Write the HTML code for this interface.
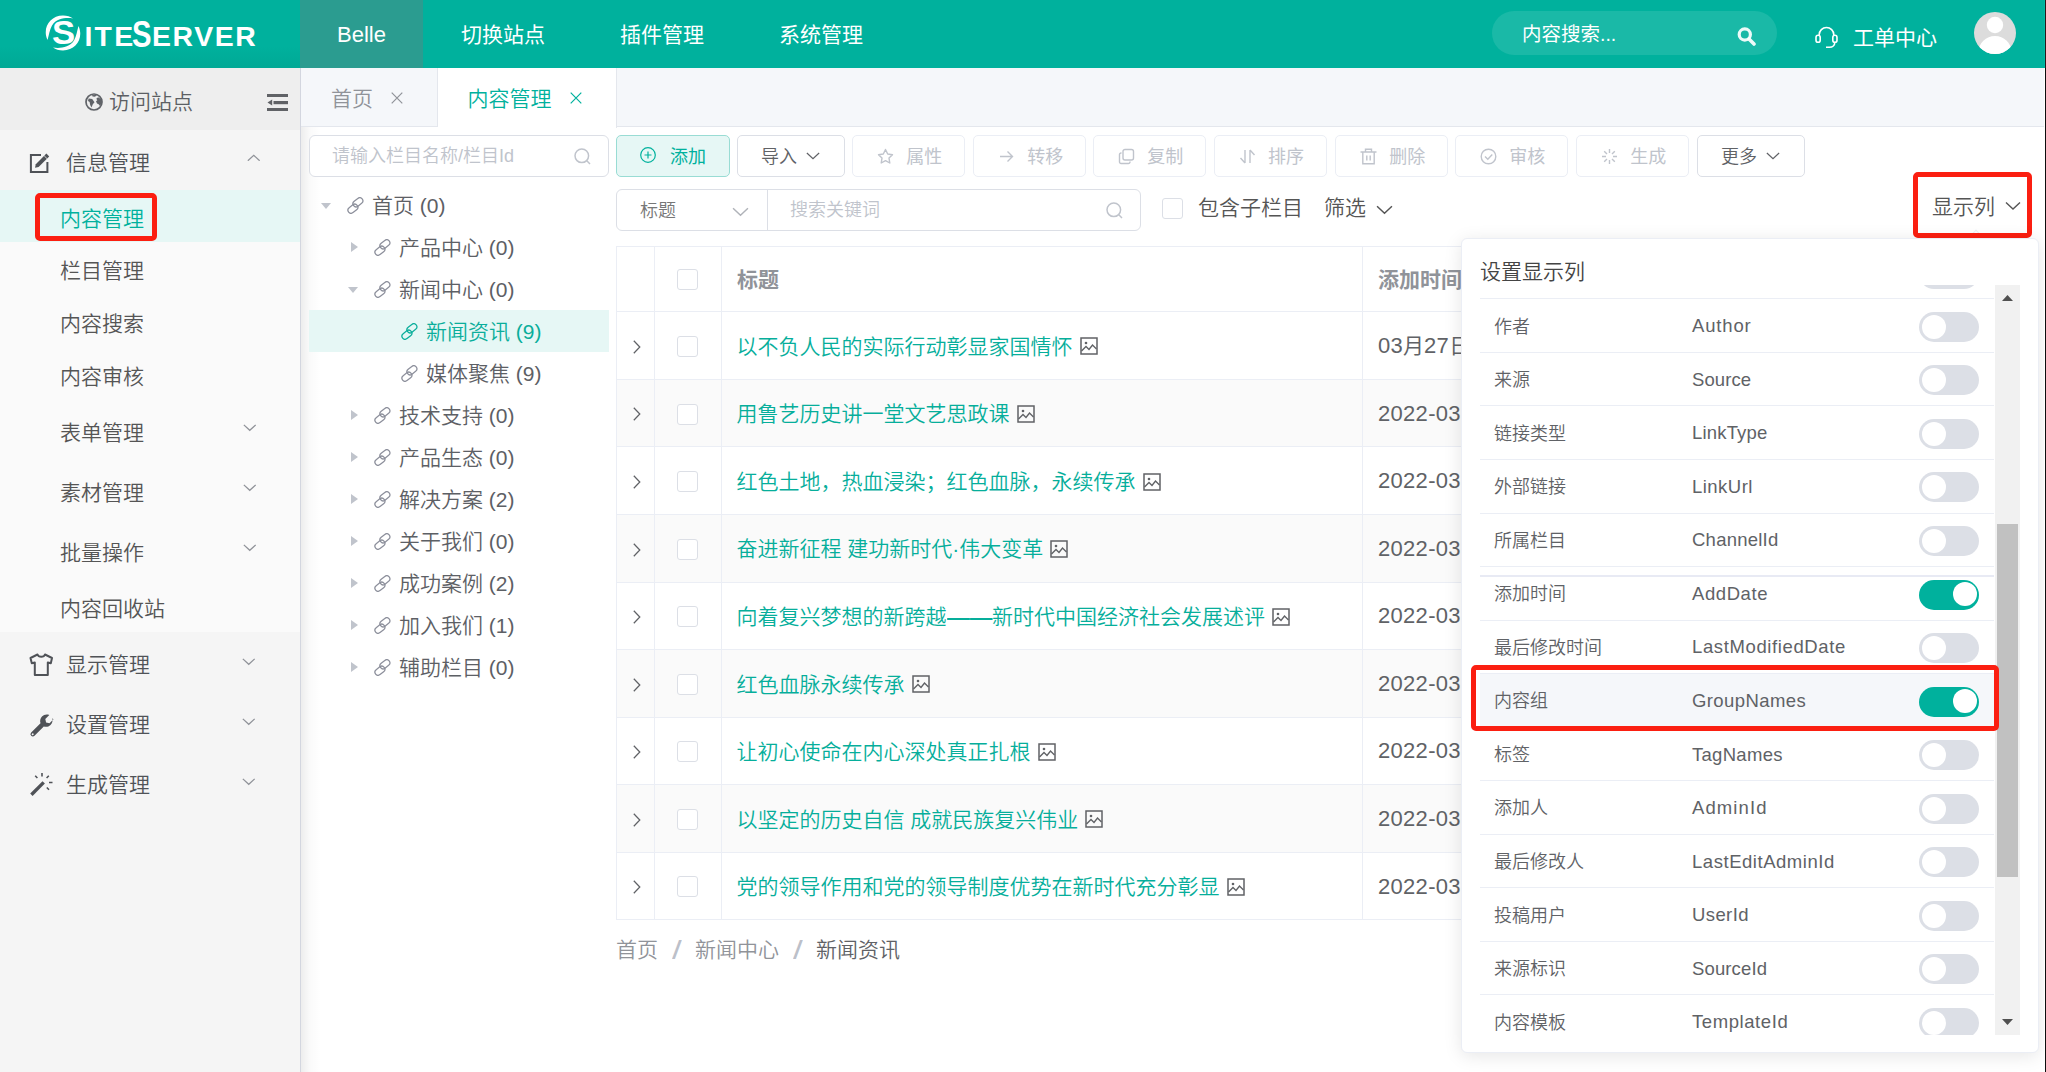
<!DOCTYPE html>
<html lang="zh-CN">
<head>
<meta charset="utf-8">
<title>SiteServer CMS</title>
<style>
*{box-sizing:border-box;margin:0;padding:0}
html,body{width:2046px;height:1072px;overflow:hidden;background:#fff}
body{font-family:"Liberation Sans","Noto Sans CJK SC",sans-serif;font-size:21px;color:#606266;position:relative;font-weight:350}
.abs{position:absolute}
svg{display:block}
i{font-style:normal}
#hdr{position:absolute;left:0;top:0;width:2046px;height:68px;background:#00b19d}
#logo{position:absolute;left:44px;top:14px;width:220px;height:40px;color:#fff}
.lg{position:absolute;line-height:40px;white-space:nowrap;font-weight:700;transform-origin:0 50%}
#belle{position:absolute;left:300px;top:0;width:123px;height:68px;background:#2b9c90;color:#fff;text-align:center;line-height:70px;font-size:22px;font-weight:400}
.nav{position:absolute;top:.7px;height:68px;line-height:68px;color:#fff;font-size:21px;white-space:nowrap;font-weight:400}
#pill{position:absolute;left:1492px;top:11px;width:285px;height:44px;border-radius:22px;background:#1ab9a7}
#pill span{position:absolute;left:30px;top:.7px;line-height:44px;color:#fff;font-size:19.5px;font-weight:400}
#avatar{position:absolute;left:1974px;top:12px;width:42px;height:42px;border-radius:50%;background:#dcdcdc;overflow:hidden}
#side{position:absolute;left:0;top:68px;width:300px;height:1004px;background:#f5f5f5}
#sideb{position:absolute;left:300px;top:68px;width:1px;height:1004px;background:#d3d6df}
#sidesh{position:absolute;left:301px;top:68px;width:20px;height:1004px;background:linear-gradient(90deg,rgba(0,0,0,.07),rgba(0,0,0,.02) 45%,rgba(0,0,0,0))}
#visit{position:absolute;left:0;top:0;width:300px;height:62px;background:#eee}
.m1{position:absolute;left:66px;font-size:21px;color:#505357;white-space:nowrap;line-height:30px}
.m2{position:absolute;left:60px;font-size:21px;color:#555;white-space:nowrap;line-height:30px}
#tabs{position:absolute;left:301px;top:68px;width:1745px;height:59px;background:#f5f7fa;border-bottom:1px solid #e4e7ed}
.tab{position:absolute;top:2px;height:58px;line-height:58px;font-size:21px;color:#909399;white-space:nowrap}
.inp{position:absolute;background:#fff;border:1px solid #dcdfe6;border-radius:6px}
.ph{position:absolute;color:#c0c4cc;font-size:18px;line-height:26px;white-space:nowrap}
.btn{position:absolute;top:135px;height:42px;border:1px solid #ebeef5;border-radius:5px;background:#fff;color:#c0c4cc;font-size:18px;line-height:40px;white-space:nowrap;font-weight:400}
.btn span{position:absolute;top:.7px}
.btn svg{position:absolute}
.tn{position:absolute;font-size:21px;line-height:30px;color:#555;white-space:nowrap}
.sl{color:#bcc0c9;font-weight:400;font-size:25px;transform:scaleX(1.4);transform-origin:0 50%}
.tri{position:absolute;width:0;height:0}
.tri.r{border-left:7px solid #c0c4cc;border-top:5.3px solid transparent;border-bottom:5.3px solid transparent}
.tri.d{border-top:6.5px solid #c0c4cc;border-left:5.5px solid transparent;border-right:5.5px solid transparent}
.cb{position:absolute;width:21px;height:21px;border:1px solid #dcdfe6;border-radius:3px;background:#fff}
#tbl{position:absolute;left:616px;top:246px;width:1414px;height:674px;border-top:1px solid #ebeef5;border-left:1px solid #ebeef5}
.tr{position:absolute;left:0;width:1413px;border-bottom:1px solid #ebeef5}
.tr.s{background:#fafafa}
.vl{position:absolute;top:0;width:1px;height:673px;background:#ebeef5}
.tt{position:absolute;left:119.500px;font-size:21px;line-height:30px;color:#06ae9b;white-space:nowrap;font-weight:350}
.td{position:absolute;left:761px;font-size:21px;line-height:30px;color:#606266;white-space:nowrap;font-weight:400}
.td b{font-weight:400;font-size:22px;letter-spacing:.3px}
.th{position:absolute;font-size:21px;line-height:30px;color:#909399;font-weight:700;white-space:nowrap}
.ex{position:absolute;left:15.700px}
.im{display:inline-block;vertical-align:-1.700px;margin-left:7px}
#pop{position:absolute;left:1461px;top:238px;width:578px;height:815px;background:#fff;border:1px solid #ebeef5;border-radius:6px;box-shadow:0 3px 18px rgba(0,0,0,.1)}
#plist{position:absolute;left:1px;top:46px;width:575px;height:750px;overflow:hidden}
.sep{position:absolute;left:17px;width:514px;height:1px;background:#ebeef5}
.pn{position:absolute;left:31px;font-size:18px;line-height:26px;color:#606266;white-space:nowrap}
.pf{position:absolute;left:229px;font-size:18.5px;line-height:26px;color:#606266;white-space:nowrap;font-weight:400}
.sw{position:absolute;left:456px;width:60px;height:30px;border-radius:15px;background:#dcdfe6}
.sw i{position:absolute;left:3px;top:2.500px;width:24px;height:24px;border-radius:50%;background:#fff}
.sw.on{background:#00b19d}
.sw.on i{left:34px;top:2px}
.red{position:absolute;border:5px solid #fb1f11;border-radius:5px}
</style>
</head>
<body>
<div id="hdr">
  <div id="logo">
    <svg class="abs" style="left:0;top:0" width="38" height="38" viewBox="0 0 38 38"><path d="M3.500 26C-2 14 6 1.500 19 1.500c4 0 7.500 1.200 10 3C23 3.500 12.500 4 8 11.500 5.500 16 5 21 3.500 26z" fill="#fff"/><path d="M34.500 12c5.500 12-2.500 24.500-15.500 24.500-4 0-7.500-1.200-10-3 6 1 16.500.5 21-7 2.500-4.500 3-9.500 4.500-14.500z" fill="#fff"/></svg>
    <span class="lg" style="left:8px;top:-1px;font-size:33px;transform:scaleX(1.050)">S</span>
    <span class="lg" style="left:40.500px;top:2px;font-size:28.400px;letter-spacing:2.200px">ITE</span>
    <span class="lg" style="left:88px;top:-.5px;font-size:37.500px;transform:scaleX(.78)">S</span>
    <span class="lg" style="left:108px;top:2px;font-size:28.400px;letter-spacing:1.600px">ERVER</span>
  </div>
  <div class="abs" style="left:0;top:46px;width:300px;height:22px;background:linear-gradient(180deg,rgba(0,60,50,0),rgba(0,60,50,.07))"></div>
  <div id="belle">Belle</div>
  <div class="nav" style="left:461px">切换站点</div>
  <div class="nav" style="left:620px">插件管理</div>
  <div class="nav" style="left:779px">系统管理</div>
  <div id="pill"><span>内容搜索...</span></div>
  <svg class="abs" style="left:1737px;top:27px" width="19" height="19" viewBox="0 0 19 19"><circle cx="7.800" cy="7.500" r="5.600" fill="none" stroke="#fff" stroke-opacity=".92" stroke-width="3.200"/><path d="M12 12l5 5" stroke="#fff" stroke-opacity=".92" stroke-width="3.600" stroke-linecap="round"/></svg>
  <svg class="abs" style="left:1815px;top:26px" width="23" height="23" viewBox="0 0 23 23"><g fill="none" stroke="#fff" stroke-width="1.600"><path d="M4.200 9.500V8.800a7.300 7.300 0 0 1 14.600 0v.7"/><rect x="1" y="9.300" width="4.200" height="7" rx="2.100"/><rect x="17.800" y="9.300" width="4.200" height="7" rx="2.100"/><path d="M19.800 16.300c0 3-2.300 5-5.300 5h-3.500"/></g></svg>
  <div class="nav" style="left:1853px;top:4.300px">工单中心</div>
  <div id="avatar"><svg width="42" height="42" viewBox="0 0 42 42"><circle cx="21" cy="13" r="8.200" fill="#fff"/><ellipse cx="21" cy="40" rx="16.500" ry="16" fill="#fff"/></svg></div>
</div>
<div id="side">
  <div id="visit">
    <svg class="abs" style="left:84.500px;top:25px" width="18" height="18" viewBox="0 0 18 18"><circle cx="9" cy="9" r="8" fill="none" stroke="#606368" stroke-width="1.700"/><path d="M3.600 5.600l3.600.4 2.300 3.200-1.700 2-1.300 3.300-1.300-2.600-.6-2.800-1.600-1.200zM11.300 5.800l1.800-1.500 2.800 1.600.9 3.300-1.600 4-1.600-2-1.600-.6-1-2.300 1.300-1zM6.200 2.600l3.600-.9 2.400.9-2.600 1.100-1.700-.3z" fill="#606368"/></svg>
    <div class="abs" style="left:109px;top:19.200px;font-size:21px;line-height:30px;color:#5c5f64;white-space:nowrap">访问站点</div>
    <svg class="abs" style="left:267px;top:26px" width="21" height="17" viewBox="0 0 21 17"><rect x="0" y="0" width="21" height="3" fill="#606266"/><rect x="6.500" y="7" width="14.500" height="3.200" fill="#606266"/><rect x="0" y="14" width="21" height="3" fill="#606266"/><path d="M.5 8.600L5.200 5.600v6z" fill="#606266"/></svg>
  </div>
  <div class="abs" style="left:0;top:122px;width:300px;height:442px;background:#fafafa"></div>
  <div class="abs" style="left:0;top:122px;width:300px;height:52px;background:#e6f7f5"></div>
  <div class="red" style="left:35px;top:125px;width:122px;height:48px"></div>
  <svg class="abs" style="left:29px;top:84px" width="23" height="22" viewBox="0 0 23 22"><path d="M12 3H1.900v16.900H18.400V9.900" fill="none" stroke="#4f5257" stroke-width="2"/><path d="M6 15.800l.8-3.600L17.400 1.600l2.800 2.800L9.600 15z" fill="#4f5257"/><path d="M15.200 3.800l2.800 2.800" stroke="#f5f5f5" stroke-width=".8"/></svg>
  <div class="m1" style="top:80px">信息管理</div>
  <svg class="abs" style="left:247px;top:85.5px" width="13.5" height="7.6" viewBox="0 0 16 9"><path d="M1 8l7-6.500L15 8" fill="none" stroke="#909399" stroke-width="1.5"/></svg>
  <div class="m2" style="top:136.3px;color:#00b19d">内容管理</div>
  <div class="m2" style="top:188.3px">栏目管理</div>
  <div class="m2" style="top:241.1px">内容搜索</div>
  <div class="m2" style="top:293.5px">内容审核</div>
  <div class="m2" style="top:349.8px">表单管理</div>
  <div class="m2" style="top:409.8px">素材管理</div>
  <div class="m2" style="top:469.8px">批量操作</div>
  <div class="m2" style="top:525.8px">内容回收站</div>
  <svg class="abs" style="left:242.5px;top:356.3px" width="13.5" height="7.6" viewBox="0 0 16 9"><path d="M1 1l7 6.500L15 1" fill="none" stroke="#909399" stroke-width="1.5"/></svg>
  <svg class="abs" style="left:242.5px;top:416.3px" width="13.5" height="7.6" viewBox="0 0 16 9"><path d="M1 1l7 6.500L15 1" fill="none" stroke="#909399" stroke-width="1.5"/></svg>
  <svg class="abs" style="left:242.5px;top:476.3px" width="13.5" height="7.6" viewBox="0 0 16 9"><path d="M1 1l7 6.500L15 1" fill="none" stroke="#909399" stroke-width="1.5"/></svg>
  <svg class="abs" style="left:29px;top:585px" width="25" height="24" viewBox="0 0 25 24"><path d="M8.500 1.500L1.500 5l1.300 5.200 3-.7V22h13V9.500l3 .7L23 5l-7-3.500c-.5 1.500-1.800 2.300-3.700 2.300S9 3 8.500 1.500z" fill="none" stroke="#4f5257" stroke-width="2" stroke-linejoin="round"/></svg>
  <div class="m1" style="top:582px">显示管理</div>
  <svg class="abs" style="left:242px;top:590.3px" width="13.5" height="7.6" viewBox="0 0 16 9"><path d="M1 1l7 6.500L15 1" fill="none" stroke="#909399" stroke-width="1.5"/></svg>
  <svg class="abs" style="left:29px;top:645px" width="25" height="25" viewBox="0 0 25 25"><path d="M23.500 6.200l-4 4-3.400-.8-.8-3.400 4-4c-2.600-1-5.500-.4-7.300 1.500-1.800 1.800-2.300 4.400-1.500 6.700L1.200 19.500a2.300 2.300 0 0 0 0 3.300c.9.900 2.400.9 3.300 0l9.300-9.300c2.300.8 4.900.3 6.700-1.500 1.900-1.900 2.500-4.500 1.800-6.800zM3.500 21.800a1 1 0 1 1-1.400-1.400 1 1 0 0 1 1.400 1.400z" fill="#4f5257" transform="translate(1,0)"/></svg>
  <div class="m1" style="top:642px">设置管理</div>
  <svg class="abs" style="left:242px;top:650.3px" width="13.5" height="7.6" viewBox="0 0 16 9"><path d="M1 1l7 6.500L15 1" fill="none" stroke="#909399" stroke-width="1.5"/></svg>
  <svg class="abs" style="left:29px;top:704px" width="25" height="25" viewBox="0 0 25 25"><path d="M1.200 21.500L13.500 9.200l2.400 2.400L3.600 23.900z" fill="#4f5257"/><path d="M13 1v3.500M6.200 3.800l2.200 2.200M19.800 3.800l-2.200 2.200M20 10.500h3.500M17.800 15.500l2.200 2.200" fill="none" stroke="#4f5257" stroke-width="1.600"/></svg>
  <div class="m1" style="top:702px">生成管理</div>
  <svg class="abs" style="left:242px;top:710.3px" width="13.5" height="7.6" viewBox="0 0 16 9"><path d="M1 1l7 6.500L15 1" fill="none" stroke="#909399" stroke-width="1.5"/></svg>
</div>
<div id="sideb"></div><div id="sidesh"></div>
<div id="tabs">
  <div class="abs" style="left:0;top:0;width:137px;height:58px;border-right:1px solid #e4e7ed"></div>
  <div class="tab" style="left:30px">首页</div>
  <svg class="abs" style="left:89.500px;top:24px" width="12" height="12" viewBox="0 0 12 12"><path d="M.7 .7l10.600 10.600M11.300 .7L.7 11.300" stroke="#909399" stroke-width="1.200" fill="none"/></svg>
  <div class="abs" style="left:137px;top:0;width:179px;height:60px;background:#fff;border-right:1px solid #e4e7ed"></div>
  <div class="tab" style="left:166.500px;color:#00b19d">内容管理</div>
  <svg class="abs" style="left:269px;top:24px" width="12" height="12" viewBox="0 0 12 12"><path d="M.7 .7l10.600 10.600M11.300 .7L.7 11.300" stroke="#00b19d" stroke-width="1.200" fill="none"/></svg>
</div>
<div id="main">
<div class="inp" style="left:309px;top:135px;width:300px;height:42px"></div>
<div class="ph" style="left:332px;top:143px">请输入栏目名称/栏目Id</div>
<svg class="abs" style="left:574px;top:148px" width="17" height="17" viewBox="0 0 17 17"><circle cx="7.800" cy="7.800" r="6.800" fill="none" stroke="#c0c4cc" stroke-width="1.500"/><path d="M12.800 12.800l3.200 3.200" stroke="#c0c4cc" stroke-width="1.500" fill="none"/></svg>
<div class="tri d" style="left:321px;top:202.7px"></div>
<svg class="abs" style="left:346.5px;top:197.2px" width="17" height="17" viewBox="0 0 17 17"><g fill="none" stroke="#8c8f9b" stroke-width="1.250"><rect x="-5.400" y="-3.100" width="10.800" height="6.200" rx="3.100" transform="translate(10.900 5.300) rotate(-38)"/><rect x="-5.400" y="-3.100" width="10.800" height="6.200" rx="3.100" transform="translate(5.900 11.700) rotate(-38)"/></g></svg>
<div class="tn" style="left:372px;top:190.7px;color:#5d6065">首页 (0)</div>
<div class="tri r" style="left:351px;top:242.2px"></div>
<svg class="abs" style="left:373.5px;top:239.2px" width="17" height="17" viewBox="0 0 17 17"><g fill="none" stroke="#8c8f9b" stroke-width="1.250"><rect x="-5.400" y="-3.100" width="10.800" height="6.200" rx="3.100" transform="translate(10.900 5.300) rotate(-38)"/><rect x="-5.400" y="-3.100" width="10.800" height="6.200" rx="3.100" transform="translate(5.900 11.700) rotate(-38)"/></g></svg>
<div class="tn" style="left:399px;top:232.7px;color:#5d6065">产品中心 (0)</div>
<div class="tri d" style="left:348px;top:286.7px"></div>
<svg class="abs" style="left:373.5px;top:281.2px" width="17" height="17" viewBox="0 0 17 17"><g fill="none" stroke="#8c8f9b" stroke-width="1.250"><rect x="-5.400" y="-3.100" width="10.800" height="6.200" rx="3.100" transform="translate(10.900 5.300) rotate(-38)"/><rect x="-5.400" y="-3.100" width="10.800" height="6.200" rx="3.100" transform="translate(5.900 11.700) rotate(-38)"/></g></svg>
<div class="tn" style="left:399px;top:274.7px;color:#5d6065">新闻中心 (0)</div>
<div class="abs" style="left:309px;top:310px;width:300px;height:41.500px;background:#e6f7f5"></div>
<svg class="abs" style="left:400.5px;top:323.2px" width="17" height="17" viewBox="0 0 17 17"><g fill="none" stroke="#0bae9b" stroke-width="1.250"><rect x="-5.400" y="-3.100" width="10.800" height="6.200" rx="3.100" transform="translate(10.900 5.300) rotate(-38)"/><rect x="-5.400" y="-3.100" width="10.800" height="6.200" rx="3.100" transform="translate(5.900 11.700) rotate(-38)"/></g></svg>
<div class="tn" style="left:426px;top:316.7px;color:#0bae9b">新闻资讯 (9)</div>
<svg class="abs" style="left:400.5px;top:365.2px" width="17" height="17" viewBox="0 0 17 17"><g fill="none" stroke="#8c8f9b" stroke-width="1.250"><rect x="-5.400" y="-3.100" width="10.800" height="6.200" rx="3.100" transform="translate(10.900 5.300) rotate(-38)"/><rect x="-5.400" y="-3.100" width="10.800" height="6.200" rx="3.100" transform="translate(5.900 11.700) rotate(-38)"/></g></svg>
<div class="tn" style="left:426px;top:358.7px;color:#5d6065">媒体聚焦 (9)</div>
<div class="tri r" style="left:351px;top:410.2px"></div>
<svg class="abs" style="left:373.5px;top:407.2px" width="17" height="17" viewBox="0 0 17 17"><g fill="none" stroke="#8c8f9b" stroke-width="1.250"><rect x="-5.400" y="-3.100" width="10.800" height="6.200" rx="3.100" transform="translate(10.900 5.300) rotate(-38)"/><rect x="-5.400" y="-3.100" width="10.800" height="6.200" rx="3.100" transform="translate(5.900 11.700) rotate(-38)"/></g></svg>
<div class="tn" style="left:399px;top:400.7px;color:#5d6065">技术支持 (0)</div>
<div class="tri r" style="left:351px;top:452.2px"></div>
<svg class="abs" style="left:373.5px;top:449.2px" width="17" height="17" viewBox="0 0 17 17"><g fill="none" stroke="#8c8f9b" stroke-width="1.250"><rect x="-5.400" y="-3.100" width="10.800" height="6.200" rx="3.100" transform="translate(10.900 5.300) rotate(-38)"/><rect x="-5.400" y="-3.100" width="10.800" height="6.200" rx="3.100" transform="translate(5.900 11.700) rotate(-38)"/></g></svg>
<div class="tn" style="left:399px;top:442.7px;color:#5d6065">产品生态 (0)</div>
<div class="tri r" style="left:351px;top:494.2px"></div>
<svg class="abs" style="left:373.5px;top:491.2px" width="17" height="17" viewBox="0 0 17 17"><g fill="none" stroke="#8c8f9b" stroke-width="1.250"><rect x="-5.400" y="-3.100" width="10.800" height="6.200" rx="3.100" transform="translate(10.900 5.300) rotate(-38)"/><rect x="-5.400" y="-3.100" width="10.800" height="6.200" rx="3.100" transform="translate(5.900 11.700) rotate(-38)"/></g></svg>
<div class="tn" style="left:399px;top:484.7px;color:#5d6065">解决方案 (2)</div>
<div class="tri r" style="left:351px;top:536.2px"></div>
<svg class="abs" style="left:373.5px;top:533.2px" width="17" height="17" viewBox="0 0 17 17"><g fill="none" stroke="#8c8f9b" stroke-width="1.250"><rect x="-5.400" y="-3.100" width="10.800" height="6.200" rx="3.100" transform="translate(10.900 5.300) rotate(-38)"/><rect x="-5.400" y="-3.100" width="10.800" height="6.200" rx="3.100" transform="translate(5.900 11.700) rotate(-38)"/></g></svg>
<div class="tn" style="left:399px;top:526.7px;color:#5d6065">关于我们 (0)</div>
<div class="tri r" style="left:351px;top:578.2px"></div>
<svg class="abs" style="left:373.5px;top:575.2px" width="17" height="17" viewBox="0 0 17 17"><g fill="none" stroke="#8c8f9b" stroke-width="1.250"><rect x="-5.400" y="-3.100" width="10.800" height="6.200" rx="3.100" transform="translate(10.900 5.300) rotate(-38)"/><rect x="-5.400" y="-3.100" width="10.800" height="6.200" rx="3.100" transform="translate(5.900 11.700) rotate(-38)"/></g></svg>
<div class="tn" style="left:399px;top:568.7px;color:#5d6065">成功案例 (2)</div>
<div class="tri r" style="left:351px;top:620.2px"></div>
<svg class="abs" style="left:373.5px;top:617.2px" width="17" height="17" viewBox="0 0 17 17"><g fill="none" stroke="#8c8f9b" stroke-width="1.250"><rect x="-5.400" y="-3.100" width="10.800" height="6.200" rx="3.100" transform="translate(10.900 5.300) rotate(-38)"/><rect x="-5.400" y="-3.100" width="10.800" height="6.200" rx="3.100" transform="translate(5.900 11.700) rotate(-38)"/></g></svg>
<div class="tn" style="left:399px;top:610.7px;color:#5d6065">加入我们 (1)</div>
<div class="tri r" style="left:351px;top:662.2px"></div>
<svg class="abs" style="left:373.5px;top:659.2px" width="17" height="17" viewBox="0 0 17 17"><g fill="none" stroke="#8c8f9b" stroke-width="1.250"><rect x="-5.400" y="-3.100" width="10.800" height="6.200" rx="3.100" transform="translate(10.900 5.300) rotate(-38)"/><rect x="-5.400" y="-3.100" width="10.800" height="6.200" rx="3.100" transform="translate(5.900 11.700) rotate(-38)"/></g></svg>
<div class="tn" style="left:399px;top:652.7px;color:#5d6065">辅助栏目 (0)</div>
<div class="btn" style="left:616px;width:114px;background:#e6f7f5;border-color:#99dcd4;color:#00b19d"><svg style="left:23.300px;top:11.300px" width="16" height="16" viewBox="0 0 16 16"><circle cx="8" cy="8" r="7.300" fill="none" stroke="#00b19d" stroke-width="1.200"/><path d="M8 4.500v7M4.500 8h7" stroke="#00b19d" stroke-width="1.200"/></svg><span style="left:53px">添加</span></div>
<div class="btn" style="left:737px;width:108px;border-color:#dcdfe6;color:#606266;font-weight:350"><span style="left:23px">导入</span><svg class="abs" style="left:68px;top:16px" width="14" height="8" viewBox="0 0 16 9"><path d="M1 1l7 6.500L15 1" fill="none" stroke="#606266" stroke-width="1.4"/></svg></div>
<div class="btn" style="left:852.3px;width:113px"><svg style="left:24px;top:12px" width="17" height="17" viewBox="0 0 17 17"><path d="M8.500 1.500l2.200 4.500 4.800.7-3.500 3.400.8 4.900-4.300-2.300-4.300 2.300.8-4.900L1.500 6.700l4.800-.7z" fill="none" stroke="#c0c4cc" stroke-width="1.400" stroke-linejoin="round"/></svg><span style="left:53px">属性</span></div>
<div class="btn" style="left:973.2px;width:113px"><svg style="left:24px;top:12px" width="17" height="17" viewBox="0 0 17 17"><path d="M2 8.500h12.500M9.500 3.500l5 5-5 5" fill="none" stroke="#c0c4cc" stroke-width="1.400"/></svg><span style="left:53px">转移</span></div>
<div class="btn" style="left:1093.2px;width:113px"><svg style="left:24px;top:12px" width="17" height="17" viewBox="0 0 17 17"><rect x="5" y="1.500" width="10.500" height="10.500" rx="2" fill="none" stroke="#c0c4cc" stroke-width="1.400"/><path d="M3.500 5h-.5a1.500 1.500 0 0 0-1.500 1.500v7.500a1.500 1.500 0 0 0 1.500 1.500h7.500a1.500 1.500 0 0 0 1.500-1.500v-.5" fill="none" stroke="#c0c4cc" stroke-width="1.400"/></svg><span style="left:53px">复制</span></div>
<div class="btn" style="left:1214.1px;width:113px"><svg style="left:24px;top:12px" width="17" height="17" viewBox="0 0 17 17"><path d="M6 2v13M6 15l-4.500-5M11 15V2M11 2l4.500 5" fill="none" stroke="#c0c4cc" stroke-width="1.400"/></svg><span style="left:53px">排序</span></div>
<div class="btn" style="left:1335.2px;width:113px"><svg style="left:24px;top:12px" width="17" height="17" viewBox="0 0 17 17"><path d="M.5 4h16M5.500 4V1.300h6V4M2.800 4v11.800h11.400V4M6.800 7.500v5M10.200 7.500v5" fill="none" stroke="#c0c4cc" stroke-width="1.400"/></svg><span style="left:53px">删除</span></div>
<div class="btn" style="left:1455.3px;width:113px"><svg style="left:24px;top:12px" width="17" height="17" viewBox="0 0 17 17"><circle cx="8.500" cy="8.500" r="7.300" fill="none" stroke="#c0c4cc" stroke-width="1.400"/><path d="M5 8.500l2.800 2.800L12.300 6.500" fill="none" stroke="#c0c4cc" stroke-width="1.400"/></svg><span style="left:53px">审核</span></div>
<div class="btn" style="left:1576.2px;width:113px"><svg style="left:24px;top:12px" width="17" height="17" viewBox="0 0 17 17"><path d="M8.500 1v4M8.500 12v4M1 8.500h4M12 8.500h4M3.200 3.200l2.800 2.800M11 11l2.800 2.800M3.200 13.800L6 11M11 6l2.800-2.800" fill="none" stroke="#c0c4cc" stroke-width="1.400"/></svg><span style="left:53px">生成</span></div>
<div class="btn" style="left:1697px;width:108px;border-color:#dcdfe6;color:#606266;font-weight:350"><span style="left:23px">更多</span><svg class="abs" style="left:68px;top:16px" width="14" height="8" viewBox="0 0 16 9"><path d="M1 1l7 6.500L15 1" fill="none" stroke="#606266" stroke-width="1.4"/></svg></div>
<div class="inp" style="left:616px;top:189px;width:525px;height:42px"></div>
<div class="abs" style="left:767px;top:190px;width:1px;height:40px;background:#dcdfe6"></div>
<div class="ph" style="left:640px;top:198px;color:#777">标题</div>
<svg class="abs" style="left:732px;top:207px" width="17" height="10" viewBox="0 0 16 9"><path d="M1 1l7 6.500L15 1" fill="none" stroke="#b0b3b9" stroke-width="1.4"/></svg>
<div class="ph" style="left:790px;top:197px">搜索关键词</div>
<svg class="abs" style="left:1106px;top:202px" width="17" height="17" viewBox="0 0 17 17"><circle cx="7.800" cy="7.800" r="6.800" fill="none" stroke="#c0c4cc" stroke-width="1.500"/><path d="M12.800 12.800l3.200 3.200" stroke="#c0c4cc" stroke-width="1.500" fill="none"/></svg>
<div class="cb" style="left:1162px;top:198px"></div>
<div class="tn" style="left:1198px;top:193px">包含子栏目</div>
<div class="tn" style="left:1324px;top:193px">筛选</div>
<svg class="abs" style="left:1376px;top:205px" width="17" height="10" viewBox="0 0 16 9"><path d="M1 1l7 6.500L15 1" fill="none" stroke="#555" stroke-width="1.4"/></svg>
<div class="tn" style="left:1932px;top:192px">显示列</div>
<svg class="abs" style="left:2005px;top:201px" width="16" height="10" viewBox="0 0 16 9"><path d="M1 1l7 6.500L15 1" fill="none" stroke="#555" stroke-width="1.4"/></svg>
<div class="abs" style="left:1970px;top:232px;width:12px;height:12px;background:#fff;border-left:1px solid #ebeef5;border-top:1px solid #ebeef5;transform:rotate(45deg)"></div>
<div class="red" style="left:1913px;top:172px;width:119px;height:66px"></div>
<div id="tbl">
<div class="tr" style="top:0;height:65px"></div>
<div class="cb" style="left:60px;top:22px"></div><div class="th" style="left:120px;top:18px">标题</div><div class="th" style="left:761px;top:18px">添加时间</div>
<div class="tr" style="top:65px;height:68px"></div>
<svg class="ex" style="top:92.9px" width="8" height="14" viewBox="0 0 8 14"><path d="M.8 .8l6 6.200-6 6.200" fill="none" stroke="#606266" stroke-width="1.250"/></svg><div class="cb" style="left:60px;top:89px"></div><div class="tt" style="top:84.8px">以不负人民的实际行动彰显家国情怀<svg class="im" width="18" height="18" viewBox="0 0 18 18"><rect x="1" y="1" width="16" height="16" fill="none" stroke="#606266" stroke-width="1.500"/><circle cx="6" cy="6" r="1.300" fill="#606266"/><path d="M1.500 14l4.500-4.500 3 3 3.500-4.500 4 4" fill="none" stroke="#606266" stroke-width="1.400"/></svg></div><div class="td" style="top:84.1px"><b>03</b>月<b>27</b>日</div>
<div class="tr s" style="top:133px;height:67px"></div>
<svg class="ex" style="top:160.45px" width="8" height="14" viewBox="0 0 8 14"><path d="M.8 .8l6 6.200-6 6.200" fill="none" stroke="#606266" stroke-width="1.250"/></svg><div class="cb" style="left:60px;top:157px"></div><div class="tt" style="top:152.35px">用鲁艺历史讲一堂文艺思政课<svg class="im" width="18" height="18" viewBox="0 0 18 18"><rect x="1" y="1" width="16" height="16" fill="none" stroke="#606266" stroke-width="1.500"/><circle cx="6" cy="6" r="1.300" fill="#606266"/><path d="M1.500 14l4.500-4.500 3 3 3.500-4.500 4 4" fill="none" stroke="#606266" stroke-width="1.400"/></svg></div><div class="td" style="top:151.65px"><b>2022-03-27</b></div>
<div class="tr" style="top:200px;height:68px"></div>
<svg class="ex" style="top:228px" width="8" height="14" viewBox="0 0 8 14"><path d="M.8 .8l6 6.200-6 6.200" fill="none" stroke="#606266" stroke-width="1.250"/></svg><div class="cb" style="left:60px;top:224px"></div><div class="tt" style="top:219.9px">红色土地，热血浸染；红色血脉，永续传承<svg class="im" width="18" height="18" viewBox="0 0 18 18"><rect x="1" y="1" width="16" height="16" fill="none" stroke="#606266" stroke-width="1.500"/><circle cx="6" cy="6" r="1.300" fill="#606266"/><path d="M1.500 14l4.500-4.500 3 3 3.500-4.500 4 4" fill="none" stroke="#606266" stroke-width="1.400"/></svg></div><div class="td" style="top:219.2px"><b>2022-03-27</b></div>
<div class="tr s" style="top:268px;height:68px"></div>
<svg class="ex" style="top:295.55px" width="8" height="14" viewBox="0 0 8 14"><path d="M.8 .8l6 6.200-6 6.200" fill="none" stroke="#606266" stroke-width="1.250"/></svg><div class="cb" style="left:60px;top:292px"></div><div class="tt" style="top:287.45px">奋进新征程 建功新时代·伟大变革<svg class="im" width="18" height="18" viewBox="0 0 18 18"><rect x="1" y="1" width="16" height="16" fill="none" stroke="#606266" stroke-width="1.500"/><circle cx="6" cy="6" r="1.300" fill="#606266"/><path d="M1.500 14l4.500-4.500 3 3 3.500-4.500 4 4" fill="none" stroke="#606266" stroke-width="1.400"/></svg></div><div class="td" style="top:286.75px"><b>2022-03-27</b></div>
<div class="tr" style="top:336px;height:67px"></div>
<svg class="ex" style="top:363.1px" width="8" height="14" viewBox="0 0 8 14"><path d="M.8 .8l6 6.200-6 6.200" fill="none" stroke="#606266" stroke-width="1.250"/></svg><div class="cb" style="left:60px;top:359px"></div><div class="tt" style="top:355px">向着复兴梦想的新跨越<i style="display:inline-block;font-weight:700;transform:scaleX(1.080);transform-origin:0 50%;margin-right:3.400px">——</i>新时代中国经济社会发展述评<svg class="im" width="18" height="18" viewBox="0 0 18 18"><rect x="1" y="1" width="16" height="16" fill="none" stroke="#606266" stroke-width="1.500"/><circle cx="6" cy="6" r="1.300" fill="#606266"/><path d="M1.500 14l4.500-4.500 3 3 3.500-4.500 4 4" fill="none" stroke="#606266" stroke-width="1.400"/></svg></div><div class="td" style="top:354.3px"><b>2022-03-27</b></div>
<div class="tr s" style="top:403px;height:68px"></div>
<svg class="ex" style="top:430.65px" width="8" height="14" viewBox="0 0 8 14"><path d="M.8 .8l6 6.200-6 6.200" fill="none" stroke="#606266" stroke-width="1.250"/></svg><div class="cb" style="left:60px;top:427px"></div><div class="tt" style="top:422.55px">红色血脉永续传承<svg class="im" width="18" height="18" viewBox="0 0 18 18"><rect x="1" y="1" width="16" height="16" fill="none" stroke="#606266" stroke-width="1.500"/><circle cx="6" cy="6" r="1.300" fill="#606266"/><path d="M1.500 14l4.500-4.500 3 3 3.500-4.500 4 4" fill="none" stroke="#606266" stroke-width="1.400"/></svg></div><div class="td" style="top:421.85px"><b>2022-03-27</b></div>
<div class="tr" style="top:471px;height:67px"></div>
<svg class="ex" style="top:498.2px" width="8" height="14" viewBox="0 0 8 14"><path d="M.8 .8l6 6.200-6 6.200" fill="none" stroke="#606266" stroke-width="1.250"/></svg><div class="cb" style="left:60px;top:494px"></div><div class="tt" style="top:490.1px">让初心使命在内心深处真正扎根<svg class="im" width="18" height="18" viewBox="0 0 18 18"><rect x="1" y="1" width="16" height="16" fill="none" stroke="#606266" stroke-width="1.500"/><circle cx="6" cy="6" r="1.300" fill="#606266"/><path d="M1.500 14l4.500-4.500 3 3 3.500-4.500 4 4" fill="none" stroke="#606266" stroke-width="1.400"/></svg></div><div class="td" style="top:489.4px"><b>2022-03-27</b></div>
<div class="tr s" style="top:538px;height:68px"></div>
<svg class="ex" style="top:565.75px" width="8" height="14" viewBox="0 0 8 14"><path d="M.8 .8l6 6.200-6 6.200" fill="none" stroke="#606266" stroke-width="1.250"/></svg><div class="cb" style="left:60px;top:562px"></div><div class="tt" style="top:557.65px">以坚定的历史自信 成就民族复兴伟业<svg class="im" width="18" height="18" viewBox="0 0 18 18"><rect x="1" y="1" width="16" height="16" fill="none" stroke="#606266" stroke-width="1.500"/><circle cx="6" cy="6" r="1.300" fill="#606266"/><path d="M1.500 14l4.500-4.500 3 3 3.500-4.500 4 4" fill="none" stroke="#606266" stroke-width="1.400"/></svg></div><div class="td" style="top:556.95px"><b>2022-03-27</b></div>
<div class="tr" style="top:606px;height:67px"></div>
<svg class="ex" style="top:633.3px" width="8" height="14" viewBox="0 0 8 14"><path d="M.8 .8l6 6.200-6 6.200" fill="none" stroke="#606266" stroke-width="1.250"/></svg><div class="cb" style="left:60px;top:629px"></div><div class="tt" style="top:625.2px">党的领导作用和党的领导制度优势在新时代充分彰显<svg class="im" width="18" height="18" viewBox="0 0 18 18"><rect x="1" y="1" width="16" height="16" fill="none" stroke="#606266" stroke-width="1.500"/><circle cx="6" cy="6" r="1.300" fill="#606266"/><path d="M1.500 14l4.500-4.500 3 3 3.500-4.500 4 4" fill="none" stroke="#606266" stroke-width="1.400"/></svg></div><div class="td" style="top:624.5px"><b>2022-03-27</b></div>
<div class="vl" style="left:37px"></div><div class="vl" style="left:104px"></div><div class="vl" style="left:745px"></div>
</div>
<div class="tn" style="left:616px;top:935px;color:#909399">首页</div><div class="tn sl" style="left:671.500px;top:935px">/</div><div class="tn" style="left:695px;top:935px;color:#909399">新闻中心</div><div class="tn sl" style="left:793px;top:935px">/</div><div class="tn" style="left:816px;top:935px;color:#606266">新闻资讯</div>
</div>
<div id="pop">
<div class="abs" style="left:18px;top:18px;font-size:21px;line-height:30px;color:#444;white-space:nowrap">设置显示列</div>
<div id="plist">
<div class="sw" style="top:-26px"></div>
<div class="sep" style="top:13px"></div><div class="pn" style="top:28.5px">作者</div><div class="pf" style="top:28.1px;letter-spacing:0.84px">Author</div><div class="sw" style="top:27px"><i></i></div>
<div class="sep" style="top:67px"></div><div class="pn" style="top:82.05px">来源</div><div class="pf" style="top:81.65px;letter-spacing:0.08px">Source</div><div class="sw" style="top:80px"><i></i></div>
<div class="sep" style="top:120px"></div><div class="pn" style="top:135.6px">链接类型</div><div class="pf" style="top:135.2px;letter-spacing:0.18px">LinkType</div><div class="sw" style="top:134px"><i></i></div>
<div class="sep" style="top:174px"></div><div class="pn" style="top:189.15px">外部链接</div><div class="pf" style="top:188.75px;letter-spacing:0.47px">LinkUrl</div><div class="sw" style="top:187px"><i></i></div>
<div class="sep" style="top:228px"></div><div class="pn" style="top:242.7px">所属栏目</div><div class="pf" style="top:242.3px;letter-spacing:0.24px">ChannelId</div><div class="sw" style="top:241px"><i></i></div>
<div class="sep" style="top:281px"></div><div class="pn" style="top:296.25px">添加时间</div><div class="pf" style="top:295.85px;letter-spacing:0.58px">AddDate</div><div class="sw on" style="top:295px"><i></i></div>
<div class="sep" style="top:335px"></div><div class="pn" style="top:349.8px">最后修改时间</div><div class="pf" style="top:349.4px;letter-spacing:0.62px">LastModifiedDate</div><div class="sw" style="top:348px"><i></i></div>
<div class="abs" style="left:17px;top:388px;width:514px;height:54px;background:#f5f7fa"></div>
<div class="sep" style="top:388px"></div><div class="pn" style="top:403.35px">内容组</div><div class="pf" style="top:402.95px;letter-spacing:0.41px">GroupNames</div><div class="sw on" style="top:402px"><i></i></div>
<div class="sep" style="top:442px"></div><div class="pn" style="top:456.9px">标签</div><div class="pf" style="top:456.5px;letter-spacing:0.29px">TagNames</div><div class="sw" style="top:455px"><i></i></div>
<div class="sep" style="top:495px"></div><div class="pn" style="top:510.45px">添加人</div><div class="pf" style="top:510.05px;letter-spacing:1.1px">AdminId</div><div class="sw" style="top:509px"><i></i></div>
<div class="sep" style="top:549px"></div><div class="pn" style="top:564px">最后修改人</div><div class="pf" style="top:563.6px;letter-spacing:0.54px">LastEditAdminId</div><div class="sw" style="top:562px"><i></i></div>
<div class="sep" style="top:602px"></div><div class="pn" style="top:617.55px">投稿用户</div><div class="pf" style="top:617.15px;letter-spacing:0.4px">UserId</div><div class="sw" style="top:616px"><i></i></div>
<div class="sep" style="top:656px"></div><div class="pn" style="top:671.1px">来源标识</div><div class="pf" style="top:670.7px;letter-spacing:0.13px">SourceId</div><div class="sw" style="top:669px"><i></i></div>
<div class="sep" style="top:709px"></div><div class="pn" style="top:724.65px">内容模板</div><div class="pf" style="top:724.25px;letter-spacing:0.58px">TemplateId</div><div class="sw" style="top:723px"><i></i></div>
<div class="sep" style="top:290px;height:2px;background:#e8eaf4"></div>
<div class="abs" style="left:532px;top:0;width:25px;height:750px;background:#f1f1f1"></div>
<div class="abs" style="left:534px;top:239px;width:21px;height:353px;background:#c1c1c1"></div>
<svg class="abs" style="left:539px;top:10px" width="11" height="6" viewBox="0 0 11 6"><path d="M0 6L5.500 0 11 6z" fill="#505050"/></svg>
<svg class="abs" style="left:539px;top:734px" width="11" height="6" viewBox="0 0 11 6"><path d="M0 0L5.500 6 11 0z" fill="#505050"/></svg>
</div>
</div>
<div class="red" style="left:1471px;top:665px;width:528px;height:66px"></div>
<div class="abs" style="left:2044px;top:68px;width:1px;height:1004px;background:#fff"></div><div class="abs" style="left:2044px;top:0;width:1px;height:68px;background:#00bba6"></div><div class="abs" style="left:2045px;top:0;width:1px;height:1072px;background:#0d0d0d"></div><div class="abs" style="left:2045px;top:0;width:1px;height:68px;background:#2a1719"></div>
</body>
</html>
